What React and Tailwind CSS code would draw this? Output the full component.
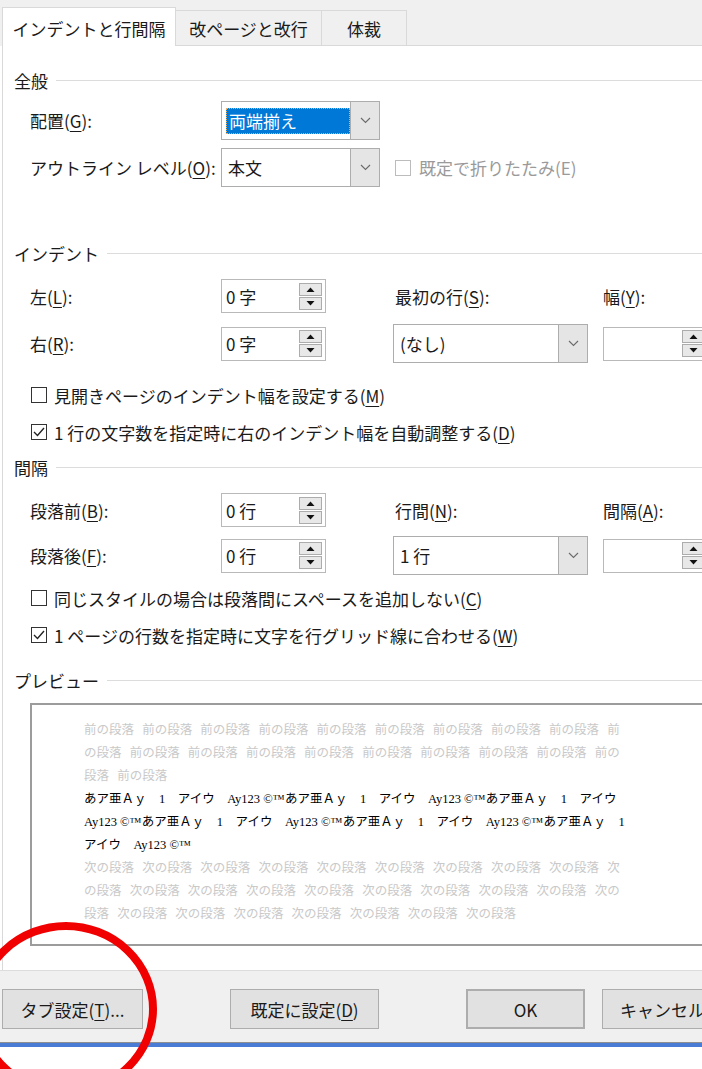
// 段落ダイアログ: インデントと行間隔タブ
const U = ({ children }) => <span className="underline underline-offset-[3px] decoration-1">{children}</span>

function Chevron() {
  return (
    <svg width="11" height="7" viewBox="0 0 11 7">
      <polyline points="1,1 5.5,5.5 10,1" fill="none" stroke="#6a6a6a" strokeWidth="1.1" />
    </svg>
  )
}

function Tri({ up }) {
  return (
    <svg width="9" height="5" viewBox="0 0 9 5">
      <polygon points={up ? '0.5,5 4.5,0.5 8.5,5' : '0.5,0 4.5,4.5 8.5,0'} fill="#111" />
    </svg>
  )
}

function Spin({ value, wide }) {
  return (
    <div className={`${wide ? 'w-[106px]' : 'w-[105px]'} shrink-0 h-[34px] bg-white border border-[#b9b9b9] flex items-center pl-[4px] pr-[3px]`}>
      <span className="flex-1">{value}</span>
      <div className="flex flex-col gap-[1px]">
        <div className="w-[23px] h-[13px] bg-[#e8e8e8] border border-[#acacac] flex items-center justify-center"><Tri up /></div>
        <div className="w-[23px] h-[13px] bg-[#e8e8e8] border border-[#acacac] flex items-center justify-center"><Tri /></div>
      </div>
    </div>
  )
}

function Select({ children, wide }) {
  return (
    <div className={`${wide ? 'w-[195px]' : 'w-[159px]'} shrink-0 h-[39px] bg-white border border-[#adadad] flex`}>
      <div className="flex-1 flex items-center pl-[6px]">{children}</div>
      <div className="w-[29px] bg-[#e5e5e5] border-l border-[#adadad] flex items-center justify-center"><Chevron /></div>
    </div>
  )
}

function Box({ checked, disabled }) {
  return (
    <div className={`w-[16px] h-[16px] shrink-0 bg-white border ${disabled ? 'border-[#bcbcbc]' : 'border-[#333]'} flex items-center justify-center`}>
      {checked && (
        <svg width="12" height="10" viewBox="0 0 12 10">
          <polyline points="1,5 4.5,8.5 11,1" fill="none" stroke="#222" strokeWidth="1.4" />
        </svg>
      )}
    </div>
  )
}

function Check({ checked, children, className }) {
  return (
    <div className={`h-[26px] pl-[28px] flex items-center gap-[7px] ${className}`}>
      <Box checked={checked} />
      <span className="whitespace-nowrap">{children}</span>
    </div>
  )
}

function Header({ children, className }) {
  return (
    <div className={`h-[28px] pl-[11px] flex items-center ${className}`}>
      <span>{children}</span>
      <div className="flex-1 h-px bg-[#dcdcdc] ml-[8px]" />
    </div>
  )
}

function Btn({ children, className }) {
  return (
    <div className={`h-[40px] bg-[#e1e1e1] border border-[#adadad] flex items-center justify-center shrink-0 whitespace-nowrap ${className}`}>
      {children}
    </div>
  )
}

const MAE1 = '前の段落 前の段落 前の段落 前の段落 前の段落 前の段落 前の段落 前の段落 前の段落 前'
const MAE2 = 'の段落 前の段落 前の段落 前の段落 前の段落 前の段落 前の段落 前の段落 前の段落 前の'
const MAE3 = '段落 前の段落'
const TSUGI1 = '次の段落 次の段落 次の段落 次の段落 次の段落 次の段落 次の段落 次の段落 次の段落 次'
const TSUGI2 = 'の段落 次の段落 次の段落 次の段落 次の段落 次の段落 次の段落 次の段落 次の段落 次の'
const TSUGI3 = '段落 次の段落 次の段落 次の段落 次の段落 次の段落 次の段落 次の段落'
const S1 = 'あア亜Ａｙ　1　アイウ　Ay123 ©™あア亜Ａｙ　1　アイウ　Ay123 ©™あア亜Ａｙ　1　アイウ'
const S2 = 'Ay123 ©™あア亜Ａｙ　1　アイウ　Ay123 ©™あア亜Ａｙ　1　アイウ　Ay123 ©™あア亜Ａｙ　1'
const S3 = 'アイウ　Ay123 ©™'

export default function App() {
  return (
    <div className="relative w-[702px] h-[1069px] overflow-hidden bg-white text-[17px] leading-none text-[#1a1a1a] font-['Noto_Sans_CJK_JP','Noto_Sans',sans-serif]">
      {/* タブ */}
      <div className="flex items-end h-[46px] bg-[#f0f0f0] pl-[2px]">
        <div className="w-[174px] h-[39px] shrink-0 bg-white border border-b-0 border-[#d9d9d9] flex items-center justify-center pt-[2px]">インデントと行間隔</div>
        <div className="w-[146px] h-[36px] shrink-0 border border-l-0 border-[#d9d9d9] flex items-center justify-center">改ページと改行</div>
        <div className="w-[85px] h-[36px] shrink-0 border border-l-0 border-[#d9d9d9] flex items-center justify-center">体裁</div>
        <div className="flex-1 border-b border-[#d9d9d9]" />
      </div>

      {/* 本体 */}
      <div className="ml-[2px] border-l border-[#d9d9d9] h-[924px] flex flex-col">
        <Header className="mt-[20px]">全般</Header>

        <div className="mt-[7px] h-[39px] pl-[27px] flex items-center">
          <div className="w-[191px] shrink-0">配置(<U>G</U>):</div>
          <div className="w-[159px] shrink-0 h-[39px] bg-white border border-[#adadad] flex">
            <div className="flex-1 flex items-center pl-[4px]">
              <div className="w-[124px] h-[26px] bg-[#0078d7] text-white border border-dotted border-[#f0b060] flex items-center pl-[2px]">両端揃え</div>
            </div>
            <div className="w-[29px] bg-[#e5e5e5] border-l border-[#adadad] flex items-center justify-center"><Chevron /></div>
          </div>
        </div>

        <div className="mt-[8px] h-[39px] pl-[27px] flex items-center">
          <div className="w-[191px] shrink-0 whitespace-nowrap">アウトライン レベル(<U>O</U>):</div>
          <Select>本文</Select>
          <div className="ml-[15px] flex items-center gap-[8px] text-[#9a9a9a] whitespace-nowrap">
            <Box disabled />
            <span>既定で折りたたみ(E)</span>
          </div>
        </div>

        <Header className="mt-[52px]">インデント</Header>

        <div className="mt-[12px] h-[34px] pl-[27px] flex items-center">
          <div className="w-[191px] shrink-0">左(<U>L</U>):</div>
          <Spin value="0 字" />
          <div className="ml-[67px] w-[195px] shrink-0 pl-[2px]">最初の行(<U>S</U>):</div>
          <div className="ml-[15px] shrink-0 whitespace-nowrap">幅(<U>Y</U>):</div>
        </div>

        <div className="mt-[11px] h-[39px] pl-[27px] flex items-center">
          <div className="w-[191px] shrink-0">右(<U>R</U>):</div>
          <Spin value="0 字" />
          <div className="ml-[67px] shrink-0"><Select wide>(なし)</Select></div>
          <div className="ml-[15px] shrink-0"><Spin value="" wide /></div>
        </div>

        <Check className="mt-[19px]">見開きページのインデント幅を設定する(<U>M</U>)</Check>
        <Check checked className="mt-[11px]">1 行の文字数を指定時に右のインデント幅を自動調整する(<U>D</U>)</Check>

        <Header className="mt-[8px]">間隔</Header>

        <div className="mt-[12px] h-[34px] pl-[27px] flex items-center">
          <div className="w-[191px] shrink-0">段落前(<U>B</U>):</div>
          <Spin value="0 行" />
          <div className="ml-[67px] w-[195px] shrink-0 pl-[2px]">行間(<U>N</U>):</div>
          <div className="ml-[15px] shrink-0 whitespace-nowrap">間隔(<U>A</U>):</div>
        </div>

        <div className="mt-[9px] h-[39px] pl-[27px] flex items-center">
          <div className="w-[191px] shrink-0">段落後(<U>F</U>):</div>
          <Spin value="0 行" />
          <div className="ml-[67px] shrink-0"><Select wide>1 行</Select></div>
          <div className="ml-[15px] shrink-0"><Spin value="" wide /></div>
        </div>

        <Check className="mt-[10px]">同じスタイルの場合は段落間にスペースを追加しない(<U>C</U>)</Check>
        <Check checked className="mt-[11px]">1 ページの行数を指定時に文字を行グリッド線に合わせる(<U>W</U>)</Check>

        <Header className="mt-[18px]">プレビュー</Header>

        {/* プレビュー */}
        <div className="mt-[9px] ml-[27px] w-[700px] h-[243px] shrink-0 bg-white border-2 border-[#9c9c9c] pl-[52px] pt-[14px] text-[12.5px] leading-[23px] whitespace-pre font-['Liberation_Serif','Noto_Sans_CJK_JP',serif]">
          <div className="text-[#c9c9c9] [word-spacing:5px]">{MAE1}</div>
          <div className="text-[#c9c9c9] [word-spacing:5px]">{MAE2}</div>
          <div className="text-[#c9c9c9] [word-spacing:5px]">{MAE3}</div>
          <div className="text-black">{S1}</div>
          <div className="text-black">{S2}</div>
          <div className="text-black">{S3}</div>
          <div className="text-[#c9c9c9] [word-spacing:5px]">{TSUGI1}</div>
          <div className="text-[#c9c9c9] [word-spacing:5px]">{TSUGI2}</div>
          <div className="text-[#c9c9c9] [word-spacing:5px]">{TSUGI3}</div>
        </div>
      </div>

      {/* ボタン */}
      <div className="h-[72px] bg-[#f0f0f0] border-t border-[#dcdcdc] flex items-start pt-[18px]">
        <Btn className="ml-[2px] w-[141px]">タブ設定(<U>T</U>)...</Btn>
        <Btn className="ml-[87px] w-[149px]">既定に設定(<U>D</U>)</Btn>
        <Btn className="ml-[87px] w-[119px] border-2 border-[#0078d7]">OK</Btn>
        <Btn className="ml-[17px] w-[119px] justify-start pl-[17px]">キャンセル</Btn>
      </div>
      <div className="h-px bg-[#8f8f8f]" />
      <div className="h-[4px] bg-[#4a7cd6]" />

      {/* 赤丸の注釈 */}
      <svg className="absolute left-[-40px] top-[905px]" width="220" height="210" viewBox="0 0 220 210">
        <ellipse cx="106" cy="104" rx="87" ry="83" fill="none" stroke="#f00000" strokeWidth="8" />
      </svg>
    </div>
  )
}
